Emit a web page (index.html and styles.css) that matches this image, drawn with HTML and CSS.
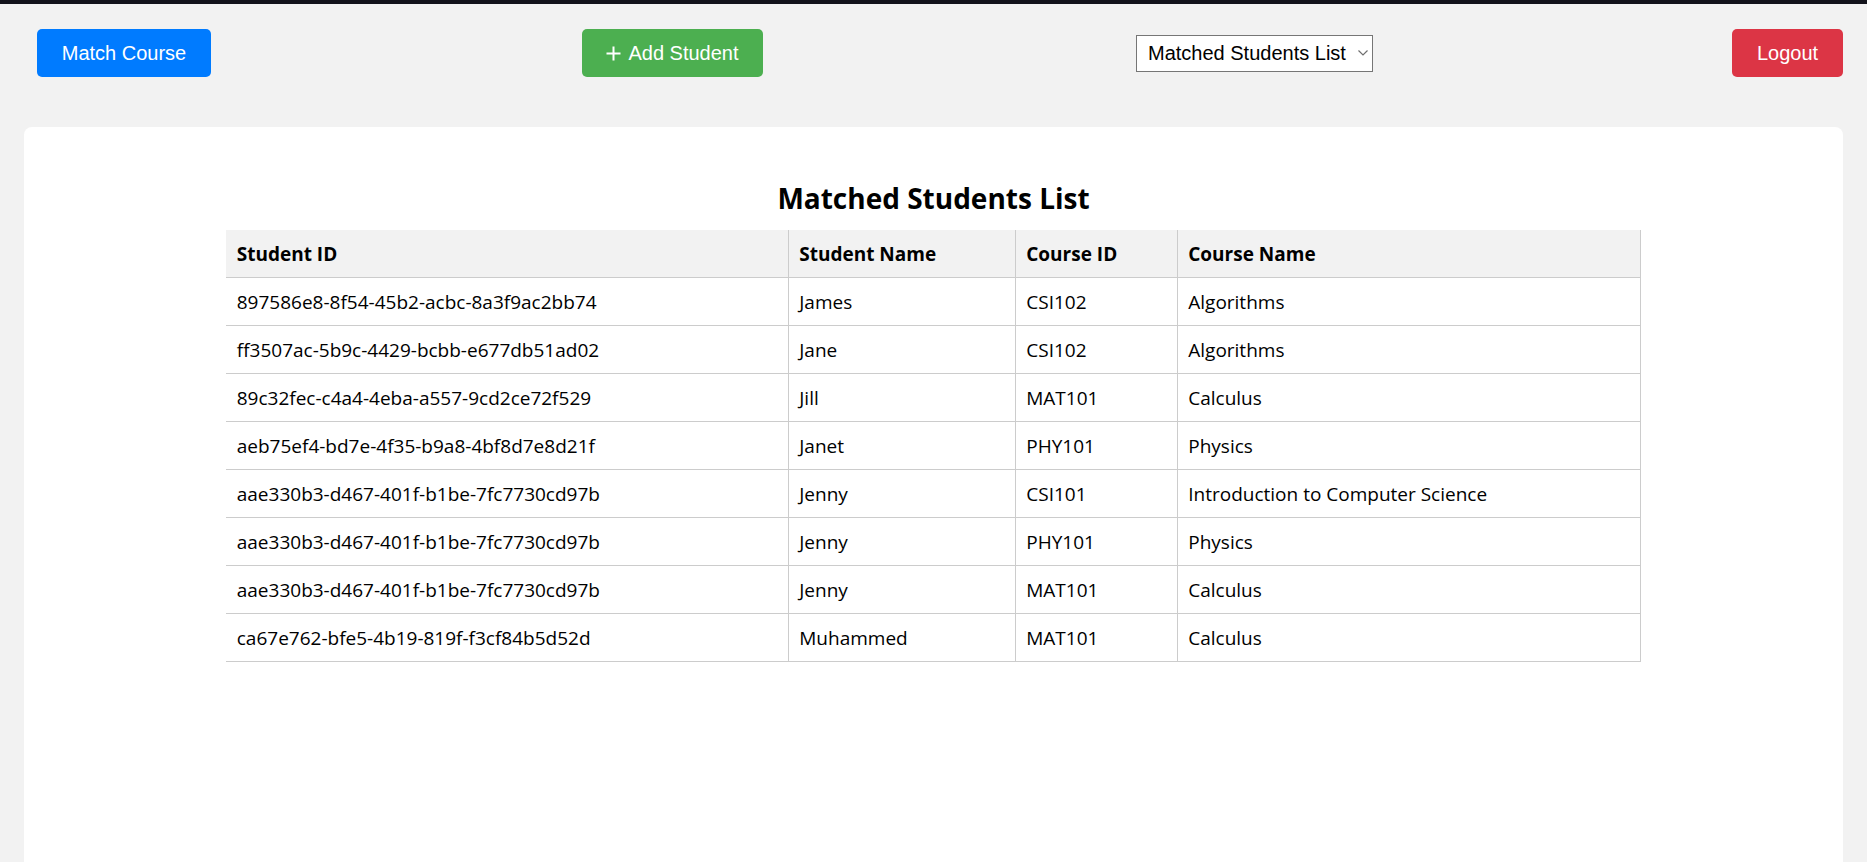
FILE: index.html
```html
<!DOCTYPE html>
<html lang="en">
<head>
<meta charset="utf-8">
<title>Matched Students</title>
<link rel="stylesheet" href="styles.css">
</head>
<body>
<div class="topbar"></div>
<header class="toolbar">
  <button class="btn btn-blue">Match Course</button>
  <button class="btn btn-green"><svg class="plus" viewBox="0 0 15 15" width="15" height="15"><path d="M7.5 0.5v14M0.5 7.5h14" stroke="#fff" stroke-width="2" fill="none"/></svg>Add Student</button>
  <span class="select-wrap">
    <select class="view-select">
      <option>Matched Students List</option>
      <option>All Students</option>
    </select>
    <svg class="chevron" viewBox="0 0 10 6" width="10" height="6"><path d="M0.5 0.5L5 5L9.5 0.5" stroke="#6f6f6f" stroke-width="1.2" fill="none"/></svg>
  </span>
  <button class="btn btn-red">Logout</button>
</header>
<main class="card">
  <h2 class="title">Matched Students List</h2>
  <table class="students">
    <colgroup>
      <col class="c1"><col class="c2"><col class="c3"><col class="c4">
    </colgroup>
    <thead>
      <tr><th>Student ID</th><th>Student Name</th><th>Course ID</th><th>Course Name</th></tr>
    </thead>
    <tbody>
      <tr><td>897586e8-8f54-45b2-acbc-8a3f9ac2bb74</td><td>James</td><td>CSI102</td><td>Algorithms</td></tr>
      <tr><td>ff3507ac-5b9c-4429-bcbb-e677db51ad02</td><td>Jane</td><td>CSI102</td><td>Algorithms</td></tr>
      <tr><td>89c32fec-c4a4-4eba-a557-9cd2ce72f529</td><td>Jill</td><td>MAT101</td><td>Calculus</td></tr>
      <tr><td>aeb75ef4-bd7e-4f35-b9a8-4bf8d7e8d21f</td><td>Janet</td><td>PHY101</td><td>Physics</td></tr>
      <tr><td>aae330b3-d467-401f-b1be-7fc7730cd97b</td><td>Jenny</td><td>CSI101</td><td>Introduction to Computer Science</td></tr>
      <tr><td>aae330b3-d467-401f-b1be-7fc7730cd97b</td><td>Jenny</td><td>PHY101</td><td>Physics</td></tr>
      <tr><td>aae330b3-d467-401f-b1be-7fc7730cd97b</td><td>Jenny</td><td>MAT101</td><td>Calculus</td></tr>
      <tr><td>ca67e762-bfe5-4b19-819f-f3cf84b5d52d</td><td>Muhammed</td><td>MAT101</td><td>Calculus</td></tr>
    </tbody>
  </table>
</main>
</body>
</html>
```
FILE: styles.css
```css
html, body {
  margin: 0;
  height: 100%;
  overflow: hidden;
}
body {
  background: #f2f2f2;
  font-family: "Open Sans", "Noto Sans", sans-serif;
  color: #000;
  display: flex;
  flex-direction: column;
}
.topbar {
  height: 4px;
  background: #13131b;
  flex: none;
}
.toolbar {
  display: flex;
  justify-content: space-between;
  align-items: center;
  padding: 25px 24px 0 37px;
  flex: none;
}
.btn {
  box-sizing: border-box;
  font-family: "Liberation Sans", Arial, sans-serif;
  font-size: 20px;
  line-height: 23px;
  color: #fff;
  border: none;
  border-radius: 5px;
  padding: 0;
  height: 48px;
  display: inline-flex;
  align-items: center;
  justify-content: center;
  white-space: nowrap;
  cursor: pointer;
  flex: none;
}
.btn-blue { background: #007bff; width: 174px; }
.btn-green { background: #4caf50; width: 181px; gap: 7px; margin-left: 12px; }
.btn-red { background: #dc3545; width: 111px; }
.plus { display: block; flex: none; }
.select-wrap {
  position: relative;
  display: block;
  flex: none;
  margin-left: 14px;
}
.view-select {
  display: block;
  box-sizing: border-box;
  appearance: none;
  -webkit-appearance: none;
  font-family: "Liberation Sans", Arial, sans-serif;
  font-size: 20px;
  width: 237px;
  height: 37px;
  border: 1px solid #767676;
  border-radius: 0;
  background: #fff;
  color: #000;
  padding: 0 0 0 11px;
}
.chevron {
  position: absolute;
  right: 5px;
  top: 15px;
  pointer-events: none;
}
.card {
  flex: 1 0 auto;
  margin: 50px 24px -20px 24px;
  background: #fff;
  border-radius: 8px;
  padding: 53px 0 0;
  display: flex;
  flex-direction: column;
  align-items: center;
}
.title {
  margin: 0 0 14px;
  font-size: 28px;
  line-height: 36px;
  font-weight: 700;
  text-align: center;
}
.students {
  width: 1415px;
  border-collapse: collapse;
  table-layout: fixed;
  font-size: 19px;
  line-height: 24px;
}
.c1 { width: 563px; }
.c2 { width: 227px; }
.c3 { width: 162px; }
.c4 { width: 463px; }
.students th,
.students td {
  text-align: left;
  padding: 11.5px 10px 11.5px 10px;
  border-right: 1px solid #cccccc;
  border-bottom: 1px solid #cccccc;
  white-space: nowrap;
}
.students th:first-child,
.students td:first-child { padding-left: 11px; }
.students th {
  background: #f2f2f2;
  font-weight: 700;
}
```
